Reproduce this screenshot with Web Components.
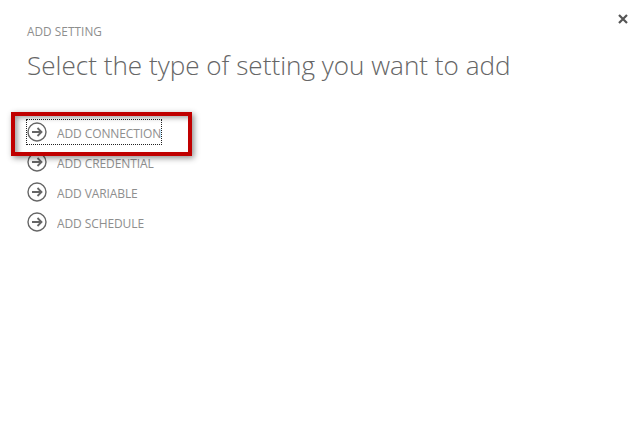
<!DOCTYPE html>
<html>
<head>
<meta charset="utf-8">
<title>Add setting</title>
<style>
  html, body { margin: 0; height: 100%; background: #fff; }
  body { font-family: "Open Sans", "Liberation Sans", sans-serif; }
</style>
</head>
<body>
<setting-dialog heading="ADD SETTING" title-text="Select the type of setting you want to add">
  <setting-option label="ADD CONNECTION" focused></setting-option>
  <setting-option label="ADD CREDENTIAL"></setting-option>
  <setting-option label="ADD VARIABLE"></setting-option>
  <setting-option label="ADD SCHEDULE"></setting-option>
</setting-dialog>
<script>
const dialogTemplate = document.createElement('template');
dialogTemplate.innerHTML = `
  <style>
    :host {
      display: block;
      position: relative;
      box-sizing: border-box;
      width: 640px;
      height: 445px;
      padding: 24px 27px 0;
      color: #666;
      overflow: hidden;
    }
    .heading {
      font-size: 11.8px;
      line-height: 15px;
      font-weight: 500;
      color: #8e8e8e;
      letter-spacing: 0.05px;
    }
    h1 {
      margin: 3px 0 0;
      font-size: 26.1px;
      line-height: 46px;
      font-weight: 300;
      color: #666;
      white-space: nowrap;
    }
    .list {
      display: flex;
      flex-direction: column;
      gap: 6px;
      margin-top: 32px;
    }
    .close {
      position: absolute;
      top: 14px;
      right: 12px;
      width: 10px;
      height: 10px;
    }
    .marker {
      position: absolute;
      left: 11px;
      top: 112px;
      width: 181px;
      height: 44px;
      box-sizing: border-box;
      border: 4px solid #c00000;
      box-shadow: 2px 2px 6px rgba(0, 0, 0, 0.45), inset 4px 3px 5px -1px rgba(0, 0, 0, 0.35);
    }
  </style>
  <div class="heading"></div>
  <h1></h1>
  <div class="list"><slot></slot></div>
  <svg class="close" viewBox="0 0 10 10"><path d="M1 1 L9 9 M9 1 L1 9" stroke="#555" stroke-width="2.2" fill="none"/></svg>
  <div class="marker"></div>
`;

const optionTemplate = document.createElement('template');
optionTemplate.innerHTML = `
  <style>
    :host {
      display: flex;
      align-items: center;
      height: 24px;
      width: 134px;
      box-sizing: border-box;
      font-size: 12px;
      font-weight: 500;
      color: #8e8e8e;
      white-space: nowrap;
    }
    :host([focused]) {
      outline: 1px dotted #222;
    }
    svg { flex: 0 0 auto; width: 20px; height: 20px; margin-right: 10px; }
    .label { flex: 1 1 auto; min-width: 0; padding-top: 2px; overflow: hidden; letter-spacing: -0.1px; }
  </style>
  <svg viewBox="0 0 20 20" fill="none" stroke="#666">
    <circle cx="10" cy="10" r="9" stroke-width="1.4"/>
    <path d="M5 10 H14.5 M10.5 6 L14.5 10 L10.5 14" stroke-width="1.8"/>
  </svg>
  <span class="label"></span>
`;

class SettingDialog extends HTMLElement {
  constructor() {
    super();
    this._shadowRoot = this.attachShadow({ mode: 'open' });
    this._shadowRoot.appendChild(dialogTemplate.content.cloneNode(true));
    this._shadowRoot.querySelector('.heading').textContent = this.getAttribute('heading');
    this._shadowRoot.querySelector('h1').textContent = this.getAttribute('title-text');
  }
}

class SettingOption extends HTMLElement {
  constructor() {
    super();
    this._shadowRoot = this.attachShadow({ mode: 'open' });
    this._shadowRoot.appendChild(optionTemplate.content.cloneNode(true));
    this._shadowRoot.querySelector('.label').textContent = this.getAttribute('label');
  }
}

window.customElements.define('setting-dialog', SettingDialog);
window.customElements.define('setting-option', SettingOption);
</script>
</body>
</html>
